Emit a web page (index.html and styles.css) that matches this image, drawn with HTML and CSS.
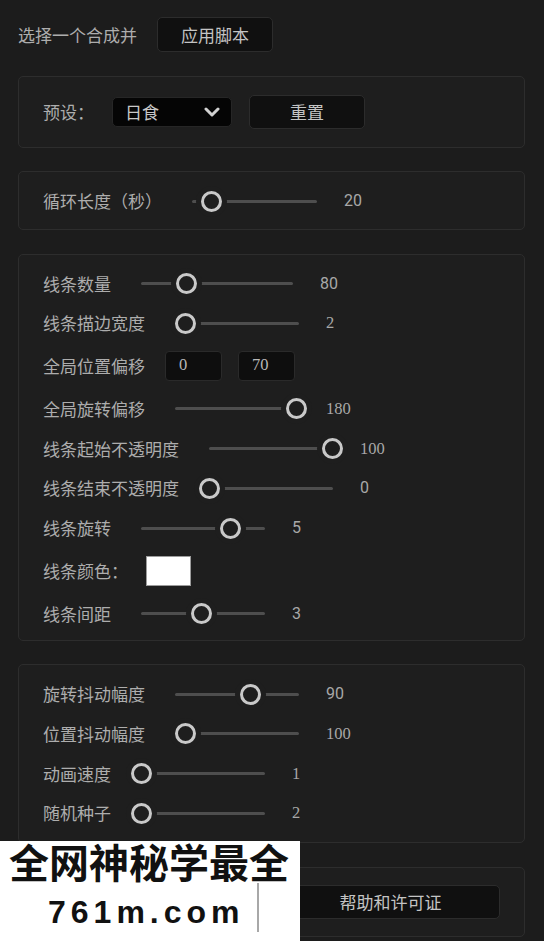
FILE: index.html
```html
<!DOCTYPE html>
<html lang="zh-CN">
<head>
<meta charset="utf-8">
<title>线条合成脚本</title>
<link rel="stylesheet" href="styles.css">
</head>
<body>
<main class="app">
  <div class="toolbar">
    <span class="label label--top">选择一个合成并</span>
    <button class="btn btn--apply">应用脚本</button>
  </div>

  <section class="panel panel--preset">
    <div class="row">
      <span class="label label--colon">预设：</span>
      <div class="select">
        <span>日食</span>
        <svg class="chevron" viewBox="0 0 16 10" aria-hidden="true"><path d="M2 2 L8 8 L14 2"/></svg>
      </div>
      <button class="btn btn--reset">重置</button>
    </div>
  </section>

  <section class="panel">
    <div class="row">
      <span class="label">循环长度（秒）</span>
      <div class="slider slider--loop" style="--p:0.157"><span class="track"></span><span class="thumb"></span></div>
      <span class="value">20</span>
    </div>
  </section>

  <section class="panel panel--list panel--lines">
    <div class="row">
      <span class="label">线条数量</span>
      <div class="slider slider--wide" style="--p:0.30"><span class="track"></span><span class="thumb"></span></div>
      <span class="value">80</span>
    </div>
    <div class="row">
      <span class="label">线条描边宽度</span>
      <div class="slider" style="--p:0.085"><span class="track"></span><span class="thumb"></span></div>
      <span class="value value--serif">2</span>
    </div>
    <div class="row row--tall">
      <span class="label">全局位置偏移</span>
      <div class="fields">
        <span class="field">0</span>
        <span class="field">70</span>
      </div>
    </div>
    <div class="row">
      <span class="label">全局旋转偏移</span>
      <div class="slider" style="--p:0.98"><span class="track"></span><span class="thumb"></span></div>
      <span class="value value--serif">180</span>
    </div>
    <div class="row">
      <span class="label">线条起始不透明度</span>
      <div class="slider" style="--p:1"><span class="track"></span><span class="thumb"></span></div>
      <span class="value value--serif">100</span>
    </div>
    <div class="row">
      <span class="label">线条结束不透明度</span>
      <div class="slider" style="--p:0"><span class="track"></span><span class="thumb"></span></div>
      <span class="value">0</span>
    </div>
    <div class="row">
      <span class="label">线条旋转</span>
      <div class="slider" style="--p:0.72"><span class="track"></span><span class="thumb"></span></div>
      <span class="value">5</span>
    </div>
    <div class="row row--tall">
      <span class="label label--colon">线条颜色：</span>
      <span class="swatch"></span>
    </div>
    <div class="row">
      <span class="label">线条间距</span>
      <div class="slider" style="--p:0.49"><span class="track"></span><span class="thumb"></span></div>
      <span class="value">3</span>
    </div>
  </section>

  <section class="panel panel--list panel--jitter">
    <div class="row">
      <span class="label">旋转抖动幅度</span>
      <div class="slider" style="--p:0.61"><span class="track"></span><span class="thumb"></span></div>
      <span class="value">90</span>
    </div>
    <div class="row">
      <span class="label">位置抖动幅度</span>
      <div class="slider" style="--p:0.085"><span class="track"></span><span class="thumb"></span></div>
      <span class="value value--serif">100</span>
    </div>
    <div class="row">
      <span class="label">动画速度</span>
      <div class="slider" style="--p:0"><span class="track"></span><span class="thumb"></span></div>
      <span class="value value--serif">1</span>
    </div>
    <div class="row">
      <span class="label">随机种子</span>
      <div class="slider" style="--p:0"><span class="track"></span><span class="thumb"></span></div>
      <span class="value value--serif">2</span>
    </div>
  </section>

  <section class="panel panel--footer">
    <div class="row row--buttons">
      <button class="btn btn--wide" aria-label="关于"></button>
      <button class="btn btn--wide">帮助和许可证</button>
    </div>
  </section>
</main>

<div class="watermark">
  <div class="wm-title">全网神秘学最全</div>
  <div class="wm-url">761m.com</div>
  <span class="wm-bar"></span>
</div>
</body>
</html>
```

FILE: styles.css
```css
html, body {
  margin: 0;
  padding: 0;
  background: #1c1c1c;
}

body {
  width: 544px;
  height: 941px;
  overflow: hidden;
  position: relative;
  font-family: "Noto Sans CJK SC", "Noto Sans", sans-serif;
  color: #adadad;
}

.app {
  display: flex;
  flex-direction: column;
  gap: 23.5px;
  padding: 17px 19px 0 18px;
}

.toolbar {
  display: flex;
  align-items: center;
  height: 35px;
}

.label {
  font-size: 17px;
  line-height: 24px;
  color: #adadad;
  white-space: nowrap;
  flex: none;
  margin-right: 20px;
}

.label--colon {
  margin-right: 18px;
}

.btn {
  font-family: "Noto Sans CJK SC", "Noto Sans", sans-serif;
  font-size: 17px;
  color: #c4c4c4;
  background: #101010;
  border: 1px solid #2c2c2c;
  border-radius: 5px;
  padding: 0;
  box-sizing: border-box;
  flex: none;
}

.btn--apply {
  width: 116px;
  height: 35px;
}

.btn--reset {
  width: 116px;
  height: 34px;
  margin-left: 17px;
}

.btn--wide {
  flex: 1;
  height: 34px;
}

.panel {
  background: #1e1e1e;
  border: 1px solid #2d2d2d;
  border-radius: 5px;
  padding: 17px 24px 16px;
  display: flex;
  flex-direction: column;
  gap: 15.75px;
}

.panel--preset {
  padding: 18px 24px;
}

.panel--lines {
  padding: 17px 24px 14px;
}

.panel--jitter {
  padding: 17px 24px 17px;
}

.panel--footer {
  padding: 17px 24px;
}

.row {
  display: flex;
  align-items: center;
  min-height: 24px;
}

.row--tall {
  height: 30px;
}

.row--buttons {
  gap: 19px;
}

.select {
  width: 120px;
  height: 30px;
  box-sizing: border-box;
  background: #050505;
  border: 1px solid #262626;
  border-radius: 5px;
  display: flex;
  align-items: center;
  justify-content: space-between;
  padding: 0 11px 0 12px;
  font-size: 17px;
  color: #c8c8c8;
  flex: none;
}

.chevron {
  width: 16px;
  height: 10px;
  fill: none;
  stroke: #d2d2d2;
  stroke-width: 3;
  stroke-linecap: round;
  stroke-linejoin: round;
}

.slider {
  position: relative;
  width: 144px;
  height: 24px;
  flex: none;
}

.slider--wide {
  width: 172px;
}

.slider--loop {
  width: 145px;
}

.track {
  position: absolute;
  left: 10px;
  right: 10px;
  top: 50%;
  height: 3px;
  margin-top: -1.5px;
  background: #4e4e4e;
  border-radius: 2px;
}

.thumb {
  position: absolute;
  top: 50%;
  left: calc(var(--p) * (100% - 21px));
  width: 21px;
  height: 21px;
  margin-top: -10.5px;
  box-sizing: border-box;
  border: 3px solid #c9c9c9;
  border-radius: 50%;
  background: #1e1e1e;
  box-shadow: 0 0 0 5px #1e1e1e;
}

.value {
  margin-left: 17px;
  font-family: "Roboto", "Liberation Sans", sans-serif;
  font-size: 16px;
  line-height: 24px;
  color: #a8a8a8;
}

.value--serif {
  font-family: "Liberation Serif", "DejaVu Serif", serif;
  font-size: 16.5px;
}

.fields {
  display: flex;
  gap: 16px;
}

.field {
  width: 57px;
  height: 30px;
  box-sizing: border-box;
  background: #0e0e0e;
  border: 1px solid #2a2a2a;
  border-radius: 4px;
  padding-left: 13px;
  font-family: "Liberation Serif", "DejaVu Serif", serif;
  font-size: 16.5px;
  line-height: 26px;
  color: #b8b8b8;
}

.swatch {
  width: 45px;
  height: 30px;
  box-sizing: border-box;
  background: #ffffff;
  border: 1px solid #9c9c9c;
}

.watermark {
  position: absolute;
  left: 0;
  top: 841px;
  width: 300px;
  height: 100px;
  background: #ffffff;
  color: #111111;
}

.wm-title {
  font-family: "Noto Sans CJK SC", sans-serif;
  font-weight: 700;
  font-size: 40px;
  line-height: 40px;
  padding-left: 9px;
  white-space: nowrap;
}

.wm-url {
  margin-top: 13px;
  font-family: "Liberation Sans", Arial, sans-serif;
  font-weight: 700;
  font-size: 32px;
  line-height: 36px;
  letter-spacing: 5px;
  padding-left: 48px;
}

.wm-bar {
  position: absolute;
  left: 257px;
  top: 42px;
  width: 2px;
  height: 49px;
  background: #a8a8a8;
}
```
